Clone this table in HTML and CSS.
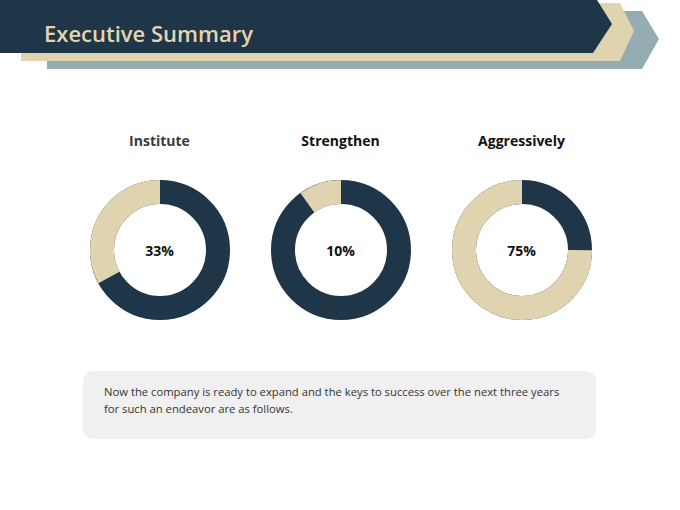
FILE: index.html
```html
<!DOCTYPE html>
<html>
<head>
<meta charset="utf-8">
<link rel="stylesheet" href="styles.css">
</head>
<body>
<header class="banner">
  <svg class="banner-shapes" width="680" height="70" viewBox="0 0 680 70">
    <polygon points="47,11 642,11 659,39 642,69 47,69" fill="#95acb2"/>
    <polygon points="21,3 620,3 634,31 620,61 21,61" fill="#e0d3b0"/>
    <polygon points="0,0 597,0 612,24 593,53 0,53" fill="#1f3548"/>
  </svg>
  <h1 class="title">Executive Summary</h1>
</header>

<section class="charts">
  <div class="chart">
    <div class="chart-label label-light">Institute</div>
    <div class="donut">
      <svg width="140" height="140" viewBox="0 0 140 140">
        <circle cx="70" cy="70" r="58" fill="none" stroke="#1f3548" stroke-width="24"/>
        <circle cx="70" cy="70" r="58" fill="none" stroke="#e0d3b0" stroke-width="24" transform="rotate(-90 70 70)" stroke-dasharray="120.26 364.42" stroke-dashoffset="-244.16"/>
      </svg>
      <span class="pct">33%</span>
    </div>
  </div>
  <div class="chart">
    <div class="chart-label">Strengthen</div>
    <div class="donut">
      <svg width="140" height="140" viewBox="0 0 140 140">
        <circle cx="70" cy="70" r="58" fill="none" stroke="#1f3548" stroke-width="24"/>
        <circle cx="70" cy="70" r="58" fill="none" stroke="#e0d3b0" stroke-width="24" transform="rotate(-90 70 70)" stroke-dasharray="36.44 364.42" stroke-dashoffset="-327.98"/>
      </svg>
      <span class="pct">10%</span>
    </div>
  </div>
  <div class="chart">
    <div class="chart-label">Aggressively</div>
    <div class="donut">
      <svg width="140" height="140" viewBox="0 0 140 140">
        <circle cx="70" cy="70" r="58" fill="none" stroke="#1f3548" stroke-width="24"/>
        <circle cx="70" cy="70" r="58" fill="none" stroke="#e0d3b0" stroke-width="24" transform="rotate(-90 70 70)" stroke-dasharray="273.32 364.42" stroke-dashoffset="-91.1"/>
      </svg>
      <span class="pct">75%</span>
    </div>
  </div>
</section>

<div class="note">
  <p>Now the company is ready to expand and the keys to success over the next three years for such an endeavor are as follows.</p>
</div>
</body>
</html>
```

FILE: styles.css
```css
html, body {
  margin: 0;
  padding: 0;
  background: #ffffff;
}
body {
  width: 680px;
  height: 510px;
  font-family: "Open Sans", "Noto Sans", sans-serif;
  overflow: hidden;
}
.banner {
  position: relative;
  height: 70px;
}
.banner-shapes {
  position: absolute;
  left: 0;
  top: 0;
}
.title {
  position: relative;
  margin: 0;
  padding: 18px 0 0 44px;
  font-size: 22px;
  line-height: 30px;
  font-weight: 600;
  color: #e3d5b0;
}
.charts {
  display: grid;
  grid-template-columns: repeat(3, 181px);
  margin: 61px 0 0 69px;
}
.chart {
  display: flex;
  flex-direction: column;
  align-items: center;
}
.chart-label {
  font-size: 14px;
  line-height: 20px;
  font-weight: 700;
  color: #111;
}
.label-light {
  color: #3a3a3a;
}
.donut {
  position: relative;
  width: 140px;
  height: 140px;
  margin-top: 29px;
}
.donut svg {
  display: block;
}
.pct {
  position: absolute;
  inset: 0;
  display: flex;
  align-items: center;
  justify-content: center;
  font-size: 14px;
  font-weight: 700;
  color: #111;
  padding-top: 1px;
}
.note {
  margin: 51px 0 0 83px;
  width: 513px;
  height: 68px;
  box-sizing: border-box;
  padding: 12px 21px 0 21px;
  background: #f0f0f0;
  border-radius: 10px;
}
.note p {
  margin: 0;
  font-size: 11.25px;
  line-height: 17px;
  color: #333;
}
```
